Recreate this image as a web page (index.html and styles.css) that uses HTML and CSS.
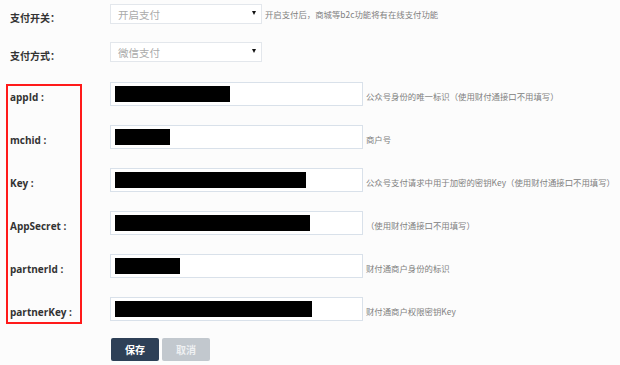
FILE: index.html
```html
<!DOCTYPE html>
<html lang="zh-CN">
<head>
<meta charset="utf-8">
<title>支付设置</title>
<link rel="stylesheet" href="styles.css">
</head>
<body>
<form class="form">
  <div class="row row-select">
    <label class="label">支付开关：</label>
    <div class="select"><span class="select-text">开启支付</span><span class="caret"></span></div>
    <span class="help">开启支付后，商城等b2c功能将有在线支付功能</span>
  </div>
  <div class="row row-select">
    <label class="label">支付方式：</label>
    <div class="select"><span class="select-text">微信支付</span><span class="caret"></span></div>
  </div>
  <div class="row">
    <label class="label">appId :</label>
    <div class="input"><span class="redact" style="width:115px"></span></div>
    <span class="help">公众号身份的唯一标识（使用财付通接口不用填写）</span>
  </div>
  <div class="row">
    <label class="label">mchid :</label>
    <div class="input"><span class="redact" style="width:55px"></span></div>
    <span class="help">商户号</span>
  </div>
  <div class="row">
    <label class="label">Key :</label>
    <div class="input"><span class="redact" style="width:191px"></span></div>
    <span class="help">公众号支付请求中用于加密的密钥Key（使用财付通接口不用填写）</span>
  </div>
  <div class="row">
    <label class="label">AppSecret :</label>
    <div class="input"><span class="redact" style="width:195px"></span></div>
    <span class="help">（使用财付通接口不用填写）</span>
  </div>
  <div class="row">
    <label class="label">partnerId :</label>
    <div class="input"><span class="redact" style="width:65px"></span></div>
    <span class="help">财付通商户身份的标识</span>
  </div>
  <div class="row">
    <label class="label">partnerKey :</label>
    <div class="input"><span class="redact" style="width:197px"></span></div>
    <span class="help">财付通商户权限密钥Key</span>
  </div>
  <div class="actions">
    <button type="button" class="btn btn-primary">保存</button>
    <button type="button" class="btn btn-disabled">取消</button>
  </div>
  <div class="highlight"></div>
</form>
</body>
</html>
```

FILE: styles.css
```css
* { box-sizing: border-box; }
html, body { margin: 0; padding: 0; }
body {
  background: #fcfcfc;
  font-family: "Open Sans", "Noto Sans CJK SC", sans-serif;
  color: #333;
  width: 620px;
  height: 365px;
  overflow: hidden;
}
.form {
  position: relative;
  padding-top: 4px;
  display: flex;
  flex-direction: column;
}
.row {
  display: flex;
  align-items: center;
  height: 24px;
  margin-bottom: 19px;
}
.row-select {
  height: 20px;
  margin-bottom: 18px;
}
.row-select + .row-select { margin-bottom: 20px; }
.label {
  width: 110px;
  padding-left: 10px;
  padding-top: 6px;
  font-size: 10px;
  font-weight: 700;
  color: #333;
  white-space: nowrap;
}
.select {
  width: 152px;
  height: 20px;
  background: #fff;
  border: 1px solid #e3e7ec;
  display: flex;
  align-items: center;
  justify-content: space-between;
  padding: 0 5px 0 7px;
}
.select-text {
  font-family: "Noto Sans CJK SC", sans-serif;
  font-size: 10.5px;
  color: #aaa;
}
.caret {
  width: 0;
  height: 0;
  border-left: 2.5px solid transparent;
  border-right: 2.5px solid transparent;
  border-top: 4px solid #111;
  margin-top: -3px;
}
.input {
  width: 253px;
  height: 24px;
  background: #fff;
  border: 1px solid #d9e1ea;
  padding: 3px 4px;
  display: flex;
  align-items: center;
}
.redact {
  display: block;
  height: 16px;
  background: #000;
}
.help {
  margin-left: 3px;
  font-family: "Noto Sans CJK SC", sans-serif;
  font-size: 8.4px;
  color: #808080;
  white-space: nowrap;
  padding-top: 3px;
}
.row-select .help { padding-top: 0; }
.actions {
  display: flex;
  gap: 3px;
  padding-left: 111px;
  margin-top: -2px;
}
.btn {
  width: 48px;
  height: 23px;
  border: none;
  border-radius: 2px;
  font-family: "Noto Sans CJK SC", sans-serif;
  font-size: 10px;
  font-weight: 700;
  color: #fff;
  padding: 0;
}
.btn-primary { background: #2e4057; }
.btn-disabled { background: #c2c8ce; color: #eef0f2; }
.highlight {
  position: absolute;
  left: 6px;
  top: 84px;
  width: 76px;
  height: 240px;
  border: 2px solid #ff1a1a;
}
```
